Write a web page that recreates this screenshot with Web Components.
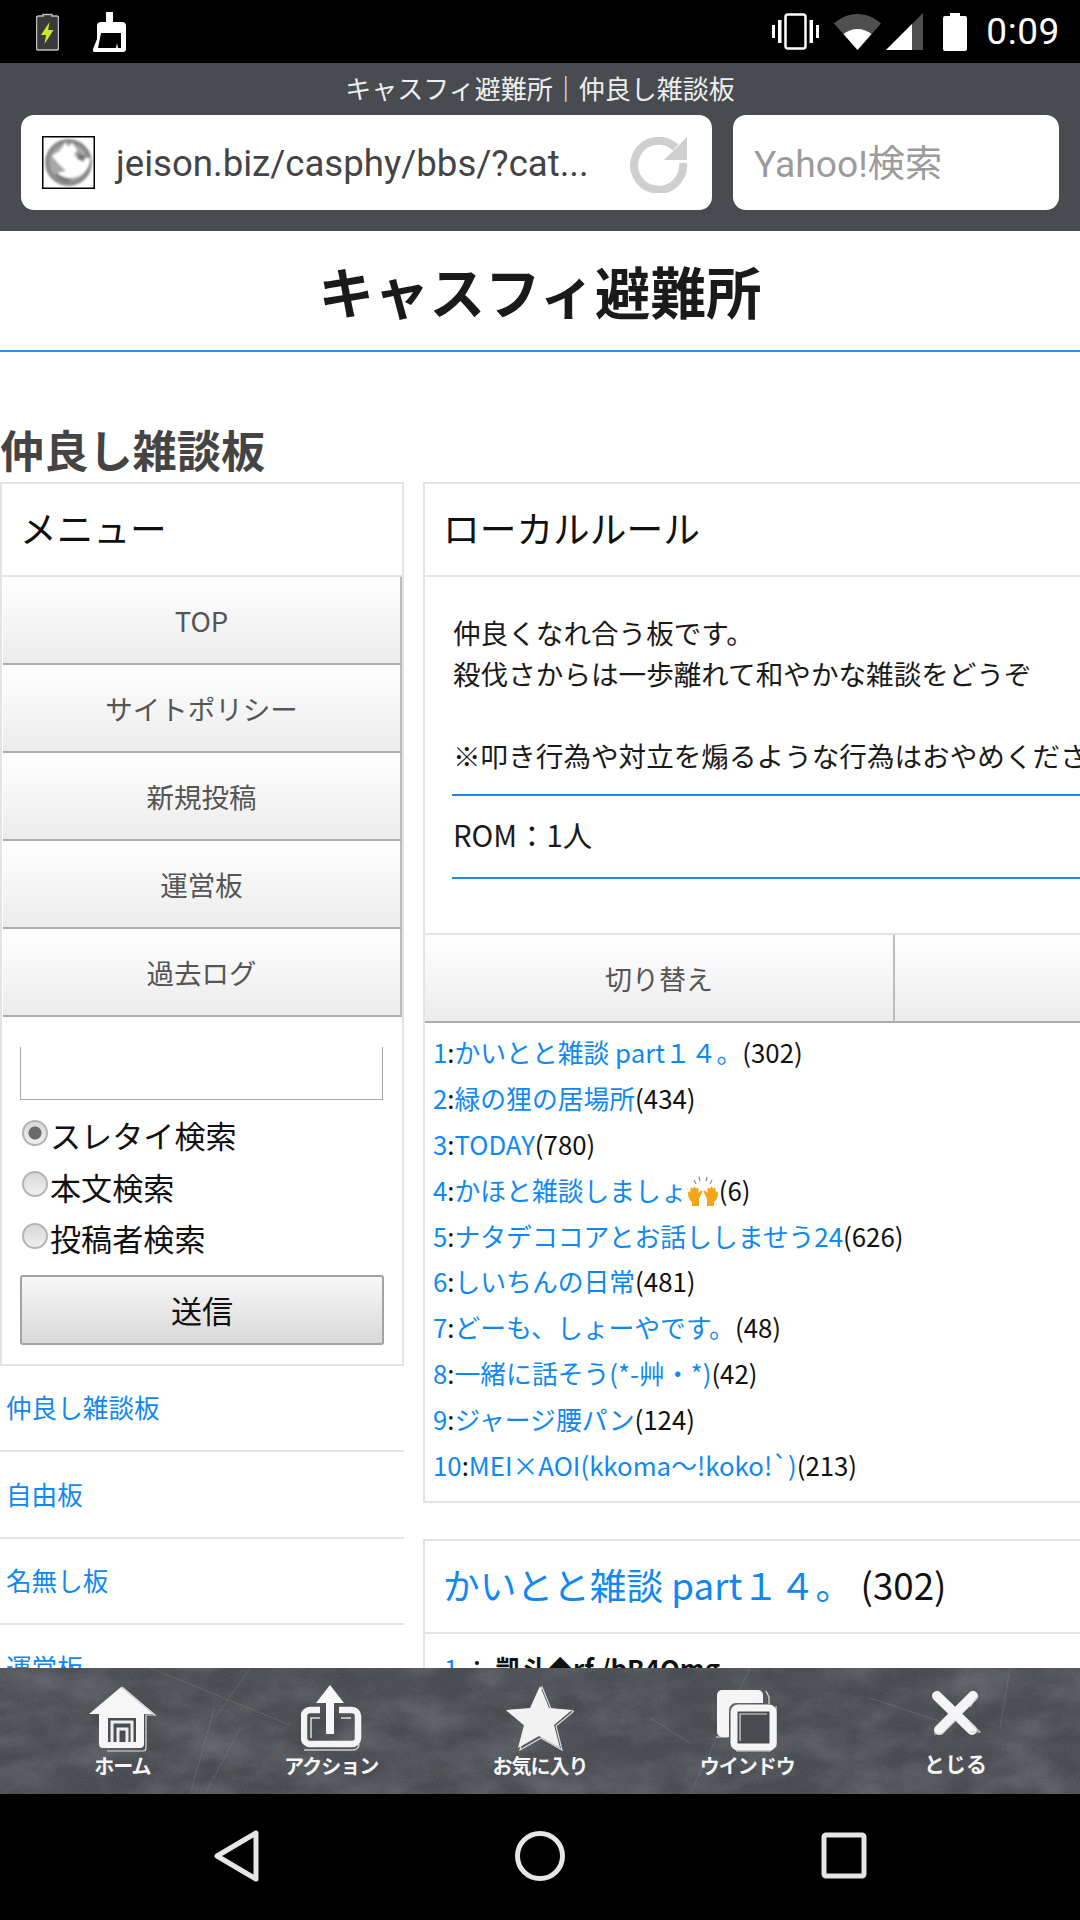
<!DOCTYPE html>
<html lang="ja">
<head>
<meta charset="utf-8">
<title>キャスフィ避難所</title>
<style>
    html, body { margin: 0; padding: 0; }
    body {
        width: 1080px;
        height: 1920px;
        overflow: hidden;
        display: flex;
        flex-direction: column;
        background: #fff;
        font-family: "Noto Sans CJK JP", sans-serif;
    }
</style>
</head>
<body>

<template id="status-bar-template">
    <style>
        :host { display: flex; flex: none; align-items: center; height: 63px; background: #000; color: #fff; }
        svg { display: block; flex: none; }
        .left { display: flex; align-items: center; gap: 34px; margin-left: 36px; }
        .right { display: flex; align-items: center; margin-left: auto; margin-right: 20px; }
        .time { font: 400 37px/66px Roboto, sans-serif; margin-left: 19px; letter-spacing: .6px; }
    </style>
    <div class="left">
        <svg width="23" height="38" viewBox="0 0 23 38">
            <path d="M7 3V1.5h9V3h4.500a2 2 0 0 1 2 2v30a2 2 0 0 1-2 2H2.500a2 2 0 0 1-2-2V5a2 2 0 0 1 2-2z" fill="#3a3a3a" stroke="#bdbdbd" stroke-width="1.500"/>
            <path d="M13.500 9 5 22h5l-1.500 9L17.500 17h-5.300z" fill="#c6e82e"/>
        </svg>
        <svg width="33" height="40" viewBox="0 0 33 40">
            <path d="M13 0h7v10h9a4 4 0 0 1 4 4v23a3 3 0 0 1-3 3H2a2 2 0 0 1-2-3l4-10V14a4 4 0 0 1 4-4h5z" fill="#fff"/>
            <path d="M8 21h20v15h-3l-1-5-1 5H5z" fill="#000"/>
        </svg>
    </div>
    <div class="right">
        <svg width="47" height="37" viewBox="0 0 47 37" fill="#fff">
            <rect x="0" y="12" width="3" height="13"/><rect x="6" y="7" width="3.500" height="23"/>
            <rect x="37.500" y="7" width="3.500" height="23"/><rect x="44" y="12" width="3" height="13"/>
            <rect x="13.500" y="1.500" width="20" height="34" rx="2.500" fill="none" stroke="#fff" stroke-width="2.500"/>
        </svg>
        <svg style="margin-left:15px" width="47" height="37" viewBox="0 0 47 37">
            <path d="M23.500 37 0 10.500C6 5 14 1 23.500 1S41 5 47 10.500z" fill="#4f4f4f"/>
            <path d="M23.500 37 9.500 21c3.800-3 8.600-5 14-5s10.200 2 14 5z" fill="#fff"/>
        </svg>
        <svg style="margin-left:5px" width="37" height="37" viewBox="0 0 37 37">
            <path d="M37 0v37H0z" fill="#4f4f4f"/>
            <path d="M26 11v26H0z" fill="#fff"/>
        </svg>
        <svg style="margin-left:20px" width="24" height="38" viewBox="0 0 24 38">
            <path d="M7 0h10v3h5a2 2 0 0 1 2 2v31a2 2 0 0 1-2 2H2a2 2 0 0 1-2-2V5a2 2 0 0 1 2-2h5z" fill="#fff"/>
        </svg>
        <span class="time">0:09</span>
    </div>
</template>

<template id="browser-bar-template">
    <style>
        :host { display: block; flex: none; height: 168px; background: #484c50; box-sizing: border-box; }
        .title { height: 52px; text-align: center; color: #eee; font-size: 26px; line-height: 50px; }
        .row { display: flex; gap: 21px; padding: 0 21px; }
        .box { display: flex; align-items: center; height: 95px; background: #fff; border-radius: 13px; box-sizing: border-box; }
        .url { width: 691px; padding-left: 21px; }
        .search { width: 326px; padding-left: 21px; }
        .fav { flex: none; display: block; }
        .text { margin-top: 2px; font-family: Roboto, "Noto Sans CJK JP", sans-serif; font-size: 36.600px; line-height: 44px; white-space: nowrap; }
        .url .text { color: #444; margin-left: 21px; }
        .search .text { color: #9b9b9b; font-size: 37.200px; }
        .reload { display: block; margin-left: auto; margin-right: 23px; }
    </style>
    <div class="title">キャスフィ避難所｜仲良し雑談板</div>
    <div class="row">
        <div class="box url">
            <svg class="fav" width="53" height="53" viewBox="0 0 53 53">
                <filter id="soft"><feGaussianBlur stdDeviation=".9"/></filter>
                <rect x=".75" y=".75" width="51.500" height="51.500" fill="#fff" stroke="#000" stroke-width="1.500"/>
                <g filter="url(#soft)">
                    <circle cx="26.500" cy="26.500" r="23.500" fill="#8a8a8a"/>
                    <circle cx="26.500" cy="26.500" r="19" fill="#a8a8a8"/>
                    <path d="M23 6l3 5 4-4 5 7-3 5 5 4 11-1c0 9-5 15-11 18-7 3-15 3-22-3l9-2-9-9-5-6c3-3 7-3 9-7 2-2 3-4 4-7z" fill="#fff"/>
                    <path d="M15 37c4 3 9 6 15 5l-4 4c-5 0-9-3-13-7zM36 17l7 3-1 6-7-3z" fill="#777"/>
                </g>
            </svg>
            <span class="text">jeison.biz/casphy/bbs/?cat...</span>
            <svg class="reload" width="60" height="60" viewBox="0 0 60 60">
                <path d="M46.500 14.500A24.500 24.500 0 1 0 54 30" fill="none" stroke="#cfcfcf" stroke-width="8"/>
                <path d="M58 4v23H35z" fill="#cfcfcf"/>
            </svg>
        </div>
        <div class="box search"><span class="text">Yahoo!検索</span></div>
    </div>
</template>

<template id="site-header-template">
    <style>
        :host { display: block; flex: none; }
        h1 {
            margin: 0; height: 119px; text-align: center; background: #fff;
            font-size: 55.500px; line-height: 118px; font-weight: 700; color: #1a1a1a;
            border-bottom: 2px solid #2196f3;
        }
    </style>
    <h1><slot></slot></h1>
</template>

<template id="board-page-template">
    <style>
        :host { display: block; flex: 1 1 0; min-height: 0; overflow: hidden; background: #fff; }
        h2 { margin: 0; padding-top: 68px; height: 62px; font-size: 44.200px; line-height: 58px; font-weight: 700; color: #444; }
        .cols { display: flex; gap: 19px; align-items: flex-start; }
        .side { flex: none; width: 404px; }
        .content { flex: none; width: 944px; display: flex; flex-direction: column; gap: 37px; }
    </style>
    <h2><slot name="title"></slot></h2>
    <div class="cols">
        <div class="side"><slot name="side"></slot></div>
        <div class="content"><slot name="content"></slot></div>
    </div>
</template>

<template id="ui-panel-template">
    <style>
        :host { display: block; box-sizing: border-box; border: 2px solid #e3e3e3; background: #fff; }
        header {
            height: 91px; padding-left: 18px; border-bottom: 2px solid #e3e3e3;
            font-size: 36.700px; line-height: 87px; color: #111; white-space: nowrap;
        }
    </style>
    <header><slot name="heading"></slot></header>
    <slot></slot>
</template>

<template id="menu-button-template">
    <style>
        :host {
            display: flex; align-items: center; justify-content: center; box-sizing: border-box;
            height: 88px; margin-left: 1px;
            background: linear-gradient(#fff, #ececec);
            border-right: 2px solid #bcbcbc; border-bottom: 2px solid #adadad;
            font-size: 27.500px; color: #555; white-space: nowrap;
        }
    </style>
    <slot></slot>
</template>

<template id="search-form-template">
    <style>
        :host { display: block; padding: 30px 19px 19px 18px; font-size: 31.100px; color: #111; }
        .field { box-sizing: border-box; height: 53px; width: 363px; border: 1.500px solid #a8a8a8; border-top: 0; background: #fff; }
        .options { padding: 9px 0 11px; }
        label { display: flex; align-items: center; height: 51.500px; line-height: 51.500px; white-space: nowrap; }
        input {
            appearance: none; flex: none; box-sizing: border-box; width: 26px; height: 26px; margin: -4px 2px 0 2px;
            border: 2px solid #b4b4b4; border-radius: 50%;
            background: linear-gradient(#d8d8d8, #f0f0f0);
        }
        input:checked { background: radial-gradient(circle, #6b6b6b 0 6px, transparent 7px), linear-gradient(#d8d8d8, #f0f0f0); }
        button {
            display: block; box-sizing: border-box; width: 364px; height: 70px; padding: 0;
            border: 2px solid #a3a3a3; border-radius: 3px;
            background: linear-gradient(#f7f7f7, #d9d9d9);
            font: inherit; color: #111;
        }
    </style>
    <div class="field"></div>
    <div class="options">
        <label><input type="radio" name="mode" checked>スレタイ検索</label>
        <label><input type="radio" name="mode">本文検索</label>
        <label><input type="radio" name="mode">投稿者検索</label>
    </div>
    <button type="button">送信</button>
</template>

<template id="board-link-template">
    <style>
        :host {
            display: flex; align-items: center; box-sizing: border-box; height: 86.500px; padding: 0 0 2px 6px;
            border-bottom: 2px solid #e3e3e3;
            font-size: 25.600px; color: #0f88f2;
        }
    </style>
    <slot></slot>
</template>

<template id="rule-body-template">
    <style>
        :host { display: block; padding: 35px 0 54px 28px; font-size: 27.600px; line-height: 41px; color: #1a1a1a; white-space: nowrap; }
        .rom { margin: 18px 0 0 -1px; padding-left: 1px; height: 81px; font-size: 29.300px; line-height: 77px; border-top: 2px solid #1e88e5; border-bottom: 2px solid #1e88e5; }
    </style>
    <slot></slot>
    <div class="rom"><slot name="rom"></slot></div>
</template>

<template id="switch-bar-template">
    <style>
        :host { display: flex; border-top: 2px solid #e3e3e3; }
        span {
            display: flex; align-items: center; justify-content: center; box-sizing: border-box;
            width: 470px; height: 88px;
            background: linear-gradient(#fff, #ececec);
            border-right: 2px solid #bcbcbc; border-bottom: 2px solid #adadad;
            font-size: 27px; color: #555;
        }
    </style>
    <span>切り替え</span><span></span>
</template>

<template id="thread-row-template">
    <style>
        :host { display: block; height: 45.900px; padding-left: 8px; font-size: 25.800px; line-height: 46px; color: #111; white-space: nowrap; }
        .blue { color: #0f88f2; }
    </style>
    <span class="blue" id="n"></span>:<span class="blue"><slot></slot></span>(<span id="count"></span>)
</template>

<template id="bottom-toolbar-template">
    <style>
        :host {
            display: block; position: relative; flex: none; height: 126px; overflow: hidden;
            background: #474b4f;
        }
        .chalk { position: absolute; left: 0; top: 0; }
        .items { position: relative; display: grid; grid-template-columns: repeat(5, 1fr); height: 100%; padding: 0 18px; }
    </style>
    <svg class="chalk" width="1080" height="126">
        <filter id="clouds" x="0" y="0" width="100%" height="100%">
            <feTurbulence type="fractalNoise" baseFrequency=".018 .03" numOctaves="4" seed="8"/>
            <feColorMatrix values="0 0 0 0 .72  0 0 0 0 .75  0 0 0 0 .78  1.1 0 0 0 -.42"/>
        </filter>
        <filter id="dark" x="0" y="0" width="100%" height="100%">
            <feTurbulence type="fractalNoise" baseFrequency=".012 .04" numOctaves="3" seed="21"/>
            <feColorMatrix values="0 0 0 0 .1  0 0 0 0 .1  0 0 0 0 .12  1.4 0 0 0 -.5"/>
        </filter>
        <filter id="grain" x="0" y="0" width="100%" height="100%">
            <feTurbulence type="fractalNoise" baseFrequency=".8" numOctaves="2" seed="3"/>
            <feColorMatrix values="0 0 0 0 1  0 0 0 0 1  0 0 0 0 1  .9 0 0 0 -.38"/>
        </filter>
        <rect width="1080" height="126" filter="url(#dark)" opacity=".7"/>
        <rect width="1080" height="126" filter="url(#clouds)" opacity=".3"/>
        <rect width="1080" height="126" filter="url(#grain)" opacity=".16"/>
        <g stroke="#9a9ea2" stroke-width="1" fill="none" opacity=".25">
            <path d="M150 0 290 57M215 38 190 126M240 60 205 126M250 0 215 50M870 30 945 55M650 50 690 75M1010 0 1000 60M750 0 690 126"/>
        </g>
    </svg>
    <div class="items"><slot></slot></div>
</template>

<template id="tool-item-template">
    <style>
        :host { display: flex; flex-direction: column; align-items: center; height: 100%; color: #f5f5f5; }
        .icon { display: flex; align-items: flex-end; justify-content: center; height: 84px; }
        .label { font-size: 20px; line-height: 26px; font-weight: 700; white-space: nowrap; letter-spacing: -1px; margin-top: 1px; }
        :host([low]) .icon { height: 68px; }
        :host([low]) .label { margin-top: 14px; font-size: 21px; letter-spacing: 0; }
    </style>
    <div class="icon"><slot></slot></div>
    <div class="label" id="label"></div>
</template>

<template id="nav-bar-template">
    <style>
        :host { display: block; flex: none; height: 126px; background: #000; padding-top: 32px; box-sizing: border-box; }
        svg { display: block; fill: none; stroke: #e6e6e6; stroke-width: 5px; stroke-linejoin: round; }
    </style>
    <svg width="1080" height="60" viewBox="0 0 1080 60">
        <path d="M256 7v46L217 30z"/>
        <circle cx="540" cy="30" r="22.500"/>
        <rect x="824" y="9" width="40" height="41" rx="2"/>
    </svg>
</template>

<status-bar></status-bar>
<browser-bar></browser-bar>
<site-header>キャスフィ避難所</site-header>

<board-page>
    <span slot="title">仲良し雑談板</span>

    <div slot="side">
        <ui-panel>
            <span slot="heading">メニュー</span>
            <menu-button>TOP</menu-button>
            <menu-button>サイトポリシー</menu-button>
            <menu-button>新規投稿</menu-button>
            <menu-button>運営板</menu-button>
            <menu-button>過去ログ</menu-button>
            <search-form></search-form>
        </ui-panel>
        <board-link>仲良し雑談板</board-link>
        <board-link>自由板</board-link>
        <board-link>名無し板</board-link>
        <board-link>運営板</board-link>
    </div>

    <ui-panel slot="content">
        <span slot="heading">ローカルルール</span>
        <rule-body>
            仲良くなれ合う板です。<br>
            殺伐さからは一歩離れて和やかな雑談をどうぞ<br>
            <br>
            ※叩き行為や対立を煽るような行為はおやめください
            <span slot="rom">ROM：1人</span>
        </rule-body>
        <switch-bar></switch-bar>
        <div style="padding: 6px 0 13px">
            <thread-row n="1" count="302">かいとと雑談 part１４。</thread-row>
            <thread-row n="2" count="434">緑の狸の居場所</thread-row>
            <thread-row n="3" count="780">TODAY</thread-row>
            <thread-row n="4" count="6">かほと雑談しましょ<svg width="32" height="30" viewBox="0 0 32 30" style="vertical-align:-5px"><g fill="#f2a71b"><path d="M1 17c0-2 2-2 2 0l.5-4c0-2 2-2 2 0l1-1c0-2 2-2 2 0l1 1c0-2 2-1.500 2 0v4l2-2c1.500-1 2.500 0 1.500 1.500L12 23v7H5v-4c-3-2-4-5-4-9z"/><path d="M31 17c0-2-2-2-2 0l-.5-4c0-2-2-2-2 0l-1-1c0-2-2-2-2 0l-1 1c0-2-2-1.500-2 0v4l-2-2c-1.500-1-2.500 0-1.500 1.500L20 23v7h7v-4c3-2 4-5 4-9z"/></g><path d="M9 8 7 4M13 5l-1-4M19 5l1-4M23 8l2-4" stroke="#8a8a8a" stroke-width="1.200"/></svg></thread-row>
            <thread-row n="5" count="626">ナタデココアとお話ししませう24</thread-row>
            <thread-row n="6" count="481">しいちんの日常</thread-row>
            <thread-row n="7" count="48">どーも、しょーやです。</thread-row>
            <thread-row n="8" count="42">一緒に話そう(*-艸・*)</thread-row>
            <thread-row n="9" count="124">ジャージ腰パン</thread-row>
            <thread-row n="10" count="213">MEI×AOI(kkoma〜!koko!`)</thread-row>
        </div>
    </ui-panel>

    <ui-panel slot="content" style="margin-top:-1px">
        <span slot="heading"><span style="color:#0f88f2">かいとと雑談 part１４。</span> (302)</span>
        <div style="padding: 16px 0 0 19px; font-size: 25.800px; line-height: 36px; white-space: nowrap; color: #111">
            <span style="color:#0f88f2">1</span> ： <b>凱斗◆rf./bB4Omg</b>
        </div>
    </ui-panel>
</board-page>

<bottom-toolbar>
    <tool-item label="ホーム">
        <svg style="margin-left:3px" width="70" height="66" viewBox="0 0 70 66">
            <path d="M33 1 66 29H57V62a3 3 0 0 1-3 3H18" fill="none" stroke="#ddd" stroke-width="1.200"/>
            <path d="M32 1 64 28H55V58a4 4 0 0 1-4 4H14a4 4 0 0 1-4-4V28H0z" fill="#f6f6f6"/>
            <rect x="19" y="32" width="28" height="24" fill="#4a4e52"/>
            <path d="M23 56V36H43V56M29 56V43H38V56" fill="none" stroke="#eee" stroke-width="3"/>
        </svg>
    </tool-item>
    <tool-item label="アクション">
        <svg style="margin-left:2px" width="62" height="68" viewBox="0 0 62 68">
            <path d="M3 66H52a6 6 0 0 0 6-6" fill="none" stroke="#ccc" stroke-width="1.500"/>
            <path d="M19 26H9a6 6 0 0 0-6 6V54a6 6 0 0 0 6 6H51a6 6 0 0 0 6-6V32a6 6 0 0 0-6-6H38" fill="none" stroke="#f4f4f4" stroke-width="6.500"/>
            <path d="M10 54V34H19M40 34H50" fill="none" stroke="#ddd" stroke-width="1.500"/>
            <path d="M25 50V19H15L29 1 43 19H33V50z" fill="#f8f8f8"/>
        </svg>
    </tool-item>
    <tool-item label="お気に入り">
        <svg width="68" height="66" viewBox="0 0 68 66">
            <path d="M36 1 45 23 68 25 50 40 56 64 35 52 14 64 20 40 2 25 25 23z" fill="none" stroke="#ddd" stroke-width="1.200"/>
            <path d="M34 0 43 22 66 24 48 39 54 62 33 50 12 62 18 39 0 24 24 22z" fill="#f2f2f2"/>
        </svg>
    </tool-item>
    <tool-item label="ウインドウ" style="margin-left:-3px">
        <svg width="62" height="62" viewBox="0 0 62 62">
            <path d="M0 47H12M50 1 53 7V14M60 16V56L54 61H20" fill="none" stroke="#ddd" stroke-width="1.200"/>
            <path d="M6 0H42a5 5 0 0 1 5 5V13H20a7 7 0 0 0-7 7V47H6a5 5 0 0 1-5-5V5a5 5 0 0 1 5-5z" fill="#f5f5f5"/>
            <rect x="18" y="18" width="39" height="39" rx="4" fill="#484c50" stroke="#f5f5f5" stroke-width="7"/>
            <path d="M24 51V24H51" fill="none" stroke="#ddd" stroke-width="1.200"/>
        </svg>
    </tool-item>
    <tool-item label="とじる" low style="margin-left:-4px">
        <svg width="50" height="46" viewBox="0 0 50 46">
            <path d="M8 40 42 6M6 6 41 40" fill="none" stroke="#f5f5f5" stroke-width="10" stroke-linecap="round"/>
            <path d="M3 44H11L25 30M39 42H49L38 31M47 6 39 17" fill="none" stroke="#ccc" stroke-width="1.200"/>
        </svg>
    </tool-item>
</bottom-toolbar>

<nav-bar></nav-bar>

<script type="module">
    // every element is the same thing: clone <name>-template into an open shadow root
    const base = (name) =>
        class extends HTMLElement {
            constructor() {
                super();
                const template_clone = document.getElementById(name + "-template").content.cloneNode(true);
                this.attachShadow({ mode: "open" }).append(template_clone);
            }
        };

    for (const name of [
        "status-bar", "browser-bar", "site-header", "board-page", "ui-panel", "menu-button",
        "search-form", "board-link", "rule-body", "switch-bar", "bottom-toolbar", "nav-bar",
    ]) {
        customElements.define(name, base(name));
    }

    customElements.define(
        "thread-row",
        class extends base("thread-row") {
            connectedCallback() {
                this.shadowRoot.getElementById("n").textContent = this.getAttribute("n");
                this.shadowRoot.getElementById("count").textContent = this.getAttribute("count");
            }
        },
    );

    customElements.define(
        "tool-item",
        class extends base("tool-item") {
            connectedCallback() {
                this.shadowRoot.getElementById("label").textContent = this.getAttribute("label");
            }
        },
    );
</script>
</body>
</html>
